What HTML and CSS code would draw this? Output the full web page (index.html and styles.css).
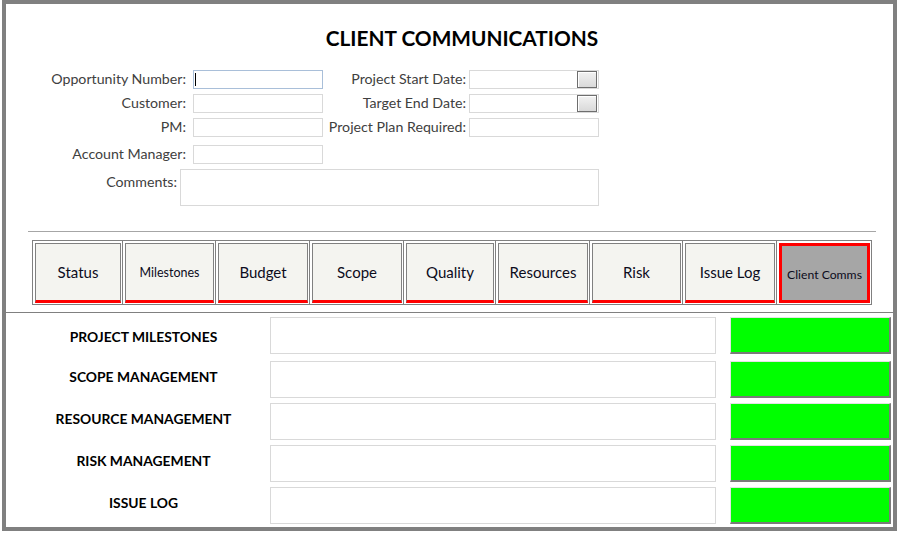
FILE: index.html
```html
<!DOCTYPE html>
<html>
<head>
<meta charset="utf-8">
<link rel="stylesheet" href="styles.css">
</head>
<body>
<div class="frame">
  <h1 class="title">CLIENT COMMUNICATIONS</h1>
  <div class="form">
    <label class="lbl">Opportunity Number:</label>
    <div class="field focus"><span class="caret"></span></div>
    <label class="lbl lbl-r">Project Start Date:</label>
    <div class="field date"><span class="dbtn"></span></div>

    <label class="lbl">Customer:</label>
    <div class="field"></div>
    <label class="lbl lbl-r">Target End Date:</label>
    <div class="field date"><span class="dbtn"></span></div>

    <label class="lbl">PM:</label>
    <div class="field"></div>
    <label class="lbl lbl-r">Project Plan Required:</label>
    <div class="field"></div>

    <label class="lbl last">Account Manager:</label>
    <div class="field last"></div>
  </div>
  <div class="comments-row">
    <label class="lbl">Comments:</label>
    <div class="field comments"></div>
  </div>
  <div class="divider"></div>
  <div class="tabs">
    <div class="tab"><div class="tbtn">Status</div></div>
    <div class="tab"><div class="tbtn small">Milestones</div></div>
    <div class="tab"><div class="tbtn">Budget</div></div>
    <div class="tab"><div class="tbtn">Scope</div></div>
    <div class="tab"><div class="tbtn">Quality</div></div>
    <div class="tab"><div class="tbtn">Resources</div></div>
    <div class="tab"><div class="tbtn">Risk</div></div>
    <div class="tab"><div class="tbtn">Issue Log</div></div>
    <div class="tab"><div class="tbtn active">Client Comms</div></div>
  </div>
  <div class="sep"></div>
  <div class="rows">
    <div class="row first">
      <div class="rlabel">PROJECT MILESTONES</div>
      <div class="rfield"></div>
      <div class="rstatus"></div>
    </div>
    <div class="row">
      <div class="rlabel">SCOPE MANAGEMENT</div>
      <div class="rfield"></div>
      <div class="rstatus"></div>
    </div>
    <div class="row">
      <div class="rlabel">RESOURCE MANAGEMENT</div>
      <div class="rfield"></div>
      <div class="rstatus"></div>
    </div>
    <div class="row">
      <div class="rlabel">RISK MANAGEMENT</div>
      <div class="rfield"></div>
      <div class="rstatus"></div>
    </div>
    <div class="row">
      <div class="rlabel">ISSUE LOG</div>
      <div class="rfield"></div>
      <div class="rstatus"></div>
    </div>
  </div>
</div>
</body>
</html>
```

FILE: styles.css
```css
* { box-sizing: border-box; }
html, body { margin: 0; padding: 0; background: #ffffff; }
body { font-family: Lato, "Open Sans", sans-serif; }

.frame {
  margin-left: 2px;
  width: 895px;
  height: 531px;
  border: 4px solid #808080;
  background: #ffffff;
}

.title {
  margin: 21px 0 0 0;
  padding-left: 25px;
  text-align: center;
  font-size: 20.8px;
  line-height: 26px;
  font-weight: 700;
  color: #000000;
}

.form {
  margin-top: 19px;
  display: grid;
  grid-template-columns: 187px 130px 146px 130px;
  grid-template-rows: 19px 19px 19px 22px;
  row-gap: 5px;
  align-items: center;
}

.lbl {
  font-size: 14.2px;
  color: #404040;
  text-align: right;
  padding-right: 7px;
  line-height: 16px;
  margin-bottom: 2px;
  white-space: nowrap;
}
.lbl-r { padding-right: 3px; }
.last { align-self: end; }
.lbl.last { margin-bottom: 2px; }

.field {
  height: 19px;
  border: 1px solid #d9d9d9;
  background: #ffffff;
}
.field.focus {
  border-color: #a9bfd9;
  display: flex;
  align-items: center;
  padding-left: 1px;
}
.caret {
  width: 1px;
  height: 13px;
  background: #000000;
}
.field.date {
  display: flex;
  justify-content: flex-end;
  align-items: center;
  padding-right: 1px;
}
.dbtn {
  width: 20px;
  height: 17px;
  border: 1px solid #6e6e6e;
  background: linear-gradient(#f2f2f2, #d9d9d9);
  box-shadow: inset 1px 1px 0 #ffffff;
}

.comments-row {
  display: flex;
  margin-top: 5px;
}
.comments-row .lbl {
  width: 171px;
  padding-right: 0;
  padding-top: 5px;
  margin-right: 3px;
}
.field.comments {
  margin-left: 0;
  width: 419px;
  height: 37px;
}

.divider {
  margin: 25px 17px 0 22px;
  height: 1px;
  background: #a6a6a6;
}

.tabs {
  margin: 8px 0 0 26px;
  width: 840px;
  height: 65px;
  border: 1px solid #808080;
  display: grid;
  grid-template-columns: 89px 93px 94px 94px 92px 94px 93px 94px 95px;
}
.tab {
  padding: 2px 1px 1px 2px;
  border-left: 1px solid #808080;
}
.tab:first-child { border-left: none; }
.tbtn {
  height: 100%;
  border: 1px solid #808080;
  border-bottom: 3px solid #ff0000;
  background: #f4f4f0;
  display: flex;
  align-items: center;
  justify-content: center;
  font-size: 15px;
  color: #0c0c1c;
  padding-top: 0;
}
.tbtn.small { font-size: 12.5px; padding-top: 1px; }
.tbtn.active {
  border: 3px solid #ff0000;
  background: #a6a6a6;
  font-size: 12.2px;
  padding-top: 3px;
}

.sep {
  margin-top: 7px;
  height: 1px;
  background: #808080;
}

.rows {
  display: flex;
  flex-direction: column;
  row-gap: 5px;
  margin-top: 4px;
}
.row {
  display: grid;
  grid-template-columns: 264px 446px 161px;
  column-gap: 0;
  height: 37px;
  align-items: center;
}
.row.first { margin-bottom: 2px; }
.rlabel {
  padding-left: 11px;
  text-align: center;
  font-weight: 700;
  font-size: 13.85px;
  color: #000000;
  margin-bottom: 7px;
  white-space: nowrap;
}
.row.first .rlabel { margin-bottom: 0; margin-top: 1px; }
.rfield {
  height: 37px;
  border: 1px solid #d9d9d9;
}
.rstatus {
  margin-left: 14px;
  width: 161px;
  height: 37px;
  background: #00ff00;
  border-top: 1px solid #e3e3e3;
  border-left: 1px solid #e3e3e3;
  border-right: 2px solid #7a7a7a;
  border-bottom: 2px solid #7a7a7a;
}
```
